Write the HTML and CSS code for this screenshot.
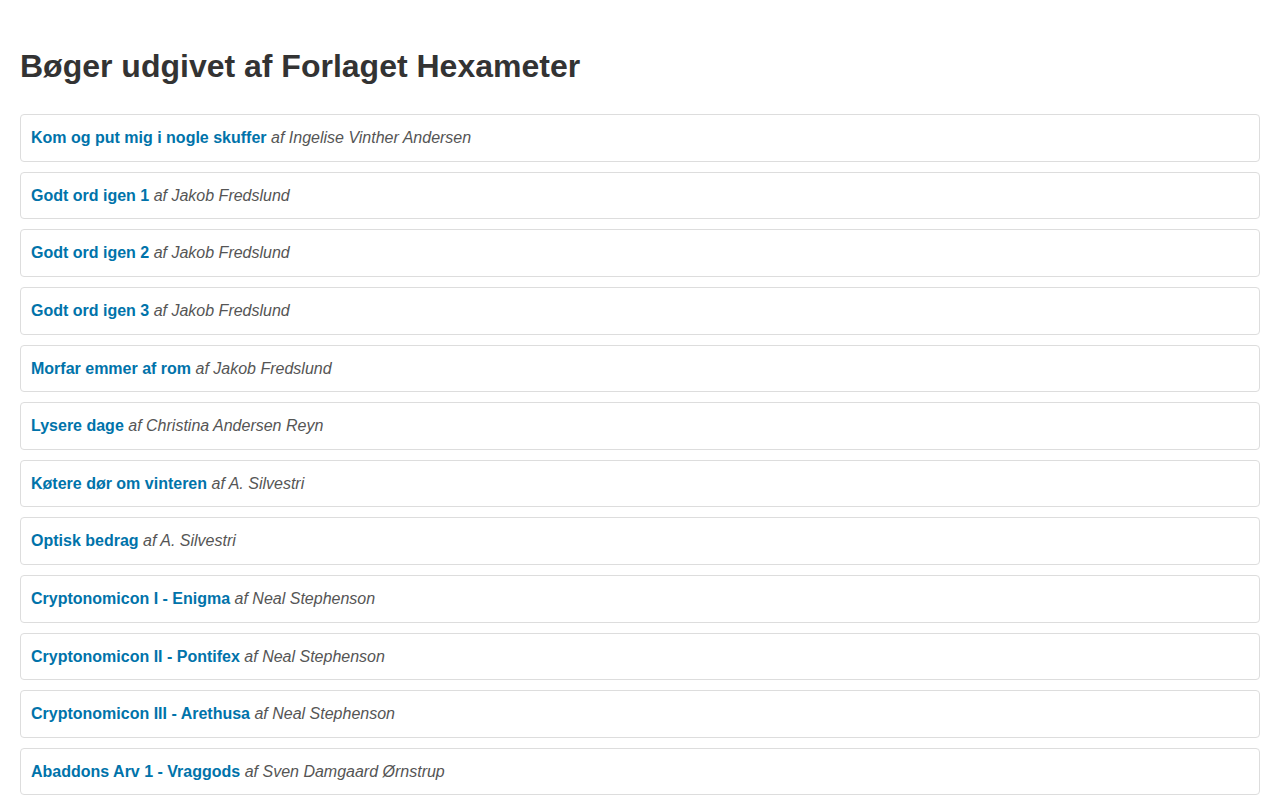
FILE: index.html
```html
<!DOCTYPE html>
<html lang="da">
<head>
<meta charset="utf-8">
<title>Bøger udgivet af Forlaget Hexameter</title>
<link rel="stylesheet" href="styles.css">
</head>
<body>
<div class="container">
  <h1 class="title">Bøger udgivet af Forlaget Hexameter</h1>
  <ul class="books">
    <li class="book"><a href="#">Kom og put mig i nogle skuffer</a> <em>af Ingelise Vinther Andersen</em></li>
    <li class="book"><a href="#">Godt ord igen 1</a> <em>af Jakob Fredslund</em></li>
    <li class="book"><a href="#">Godt ord igen 2</a> <em>af Jakob Fredslund</em></li>
    <li class="book"><a href="#">Godt ord igen 3</a> <em>af Jakob Fredslund</em></li>
    <li class="book"><a href="#">Morfar emmer af rom</a> <em>af Jakob Fredslund</em></li>
    <li class="book"><a href="#">Lysere dage</a> <em>af Christina Andersen Reyn</em></li>
    <li class="book"><a href="#">Køtere dør om vinteren</a> <em>af A. Silvestri</em></li>
    <li class="book"><a href="#">Optisk bedrag</a> <em>af A. Silvestri</em></li>
    <li class="book"><a href="#">Cryptonomicon I - Enigma</a> <em>af Neal Stephenson</em></li>
    <li class="book"><a href="#">Cryptonomicon II - Pontifex</a> <em>af Neal Stephenson</em></li>
    <li class="book"><a href="#">Cryptonomicon III - Arethusa</a> <em>af Neal Stephenson</em></li>
    <li class="book"><a href="#">Abaddons Arv 1 - Vraggods</a> <em>af Sven Damgaard Ørnstrup</em></li>
  </ul>
</div>
</body>
</html>
```
FILE: styles.css
```css
html, body {
  margin: 0;
  padding: 0;
  background: #fff;
}
body {
  font-family: "Liberation Sans", Arial, sans-serif;
  font-size: 16px;
  color: #333;
}
.container {
  padding: 20px 20px;
}
.title {
  font-size: 32px;
  font-weight: bold;
  line-height: 35.2px;
  margin: 29px 0 30px;
  color: #333;
}
.books {
  list-style: none;
  margin: 0;
  padding: 0;
}
.book {
  border: 1px solid #ddd;
  border-radius: 4px;
  padding: 10px;
  line-height: 25.6px;
  margin-bottom: 10px;
}
.book a {
  color: #0073aa;
  font-weight: bold;
  text-decoration: none;
}
.book em {
  color: #555;
  font-style: italic;
}
```
